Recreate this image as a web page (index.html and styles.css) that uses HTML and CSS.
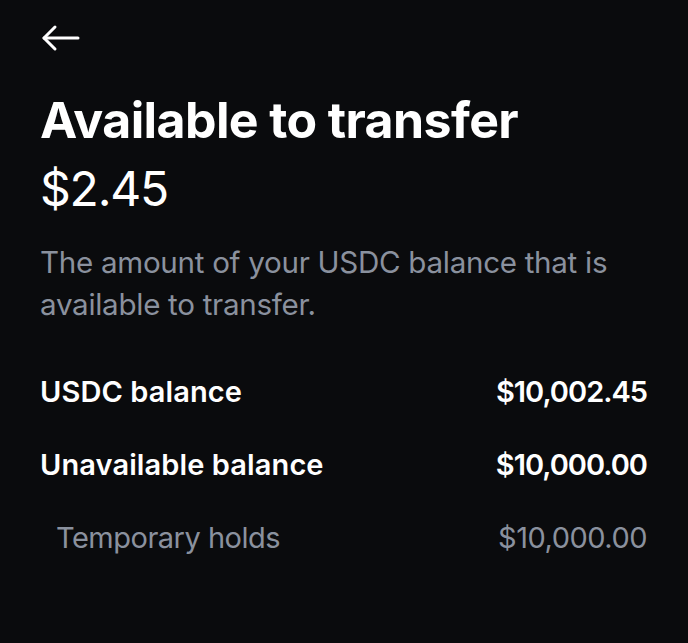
FILE: index.html
```html
<!DOCTYPE html>
<html>
<head>
<meta charset="utf-8">
<link rel="stylesheet" href="styles.css">
</head>
<body>
<div class="screen">
  <div class="topbar">
    <svg class="back" width="40" height="28" viewBox="0 0 40 28" fill="none" stroke="#fff" stroke-width="3" stroke-linecap="round" stroke-linejoin="round">
      <path d="M38 14H4"/>
      <path d="M15 3L4 14l11 11"/>
    </svg>
  </div>
  <h1 class="title">Available to transfer</h1>
  <div class="amount">$2.45</div>
  <p class="desc">The amount of your USDC balance that is available to transfer.</p>
  <div class="rows">
    <div class="row strong"><span class="label">USDC balance</span><span class="value">$10,002.45</span></div>
    <div class="row strong"><span class="label">Unavailable balance</span><span class="value">$10,000.00</span></div>
    <div class="row sub"><span class="label">Temporary holds</span><span class="value">$10,000.00</span></div>
  </div>
</div>
</body>
</html>
```
FILE: styles.css
```css
html, body {
  margin: 0;
  padding: 0;
  background: #0a0b0d;
}
.screen {
  width: 688px;
  height: 643px;
  box-sizing: border-box;
  padding: 22px 41px 0 40px;
  font-family: Inter, "Noto Sans", sans-serif;
  color: #fff;
}
.topbar {
  height: 32px;
  display: flex;
  align-items: center;
}
.back {
  display: block;
}
.title {
  margin: 36px 0 0;
  font-size: 50px;
  font-weight: 700;
  letter-spacing: -0.6px;
  line-height: 60px;
}
.amount {
  margin-top: 11px;
  font-size: 48px;
  font-weight: 400;
  line-height: 56px;
  letter-spacing: -1.2px;
}
.desc {
  margin: 24px 0 0;
  font-size: 29.6px;
  line-height: 42px;
  color: #8a919e;
  letter-spacing: -0.3px;
}
.rows {
  margin-top: 49px;
  display: flex;
  flex-direction: column;
  gap: 37px;
}
.row {
  display: flex;
  justify-content: space-between;
  font-size: 29px;
  line-height: 36px;
  letter-spacing: -0.5px;
}
.row.strong {
  font-weight: 600;
}
.row.strong .label {
  letter-spacing: 0.1px;
}
.row.strong .value {
  letter-spacing: -1px;
}
.row.sub {
  color: #8a919e;
  padding-left: 16px;
}
```
